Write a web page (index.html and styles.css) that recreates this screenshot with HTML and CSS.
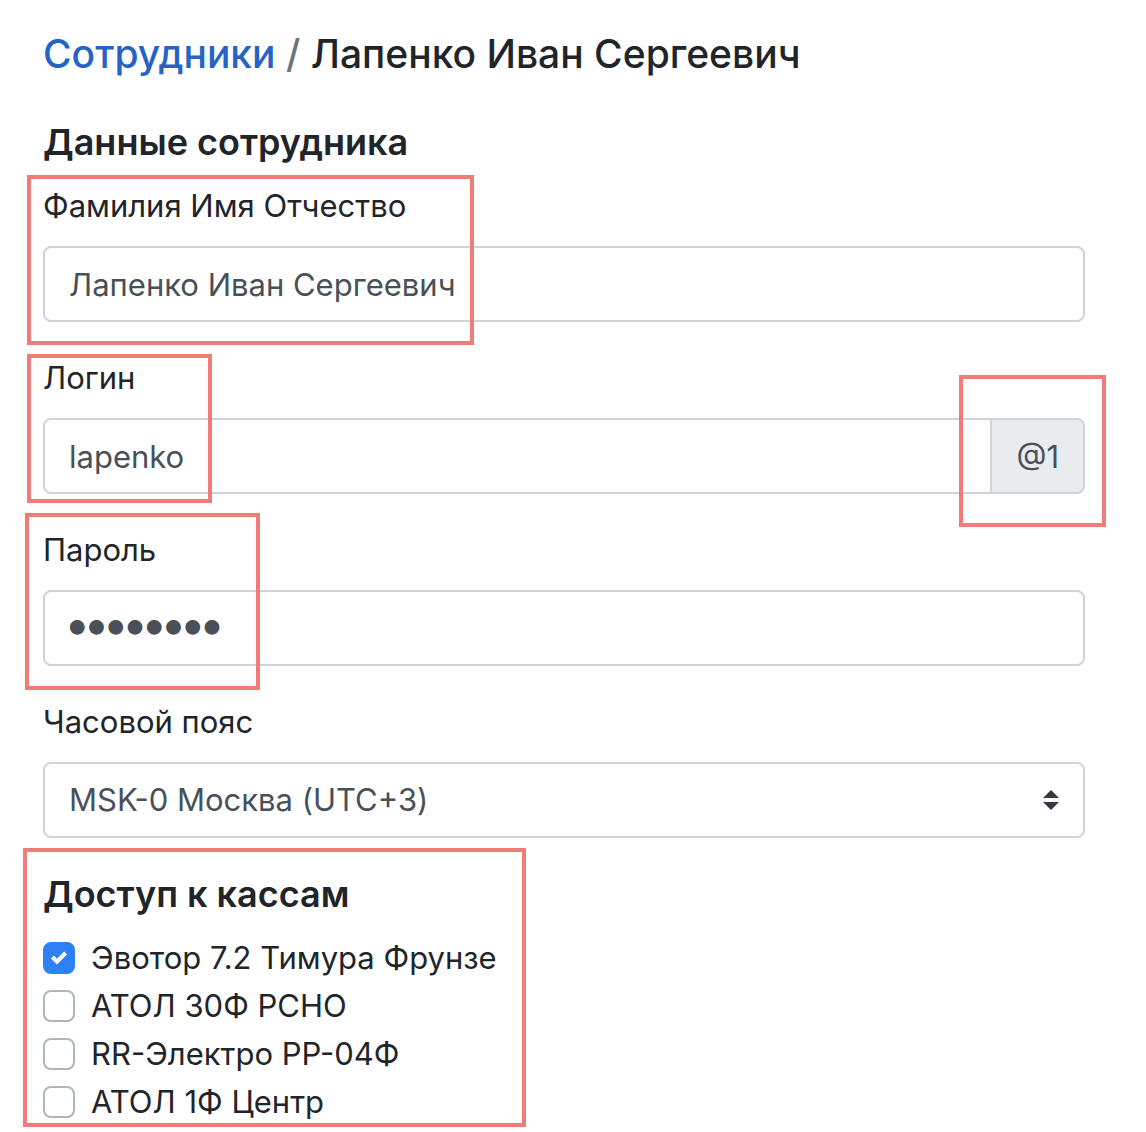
FILE: index.html
```html
<!DOCTYPE html>
<html lang="ru">
<head>
<meta charset="utf-8">
<title>Лапенко Иван Сергеевич</title>
<link rel="stylesheet" href="styles.css">
</head>
<body>
<div class="page">
  <h1 class="title"><a class="crumb" href="#">Сотрудники</a> <span class="sep">/</span> Лапенко Иван Сергеевич</h1>

  <h2 class="section">Данные сотрудника</h2>

  <div class="group">
    <label class="label" for="fio">Фамилия Имя Отчество</label>
    <input class="control" id="fio" type="text" value="Лапенко Иван Сергеевич">
  </div>

  <div class="group">
    <label class="label" for="login">Логин</label>
    <div class="input-group">
      <input class="control control-left" id="login" type="text" value="lapenko">
      <span class="addon">@1</span>
    </div>
  </div>

  <div class="group">
    <label class="label" for="pass">Пароль</label>
    <input class="control control-pass" id="pass" type="password" value="12345678">
  </div>

  <div class="group">
    <label class="label" for="tz">Часовой пояс</label>
    <select class="control select" id="tz">
      <option>MSK-0 Москва (UTC+3)</option>
    </select>
  </div>

  <h2 class="section">Доступ к кассам</h2>

  <div class="checks">
    <div class="check">
      <span class="box box-on">
        <svg viewBox="0 0 8 8" width="16" height="16"><path fill="#fff" d="M6.564.75l-3.59 3.612-1.538-1.55L0 4.26 2.974 7.25 8 2.193z"/></svg>
      </span>
      <span class="check-label">Эвотор 7.2 Тимура Фрунзе</span>
    </div>
    <div class="check">
      <span class="box"></span>
      <span class="check-label">АТОЛ 30Ф РСНО</span>
    </div>
    <div class="check">
      <span class="box"></span>
      <span class="check-label">RR-Электро РР-04Ф</span>
    </div>
    <div class="check">
      <span class="box"></span>
      <span class="check-label">АТОЛ 1Ф Центр</span>
    </div>
  </div>
</div>

<div class="mark mark-fio"></div>
<div class="mark mark-login"></div>
<div class="mark mark-domain"></div>
<div class="mark mark-pass"></div>
<div class="mark mark-access"></div>
</body>
</html>
```

FILE: styles.css
```css
html, body {
  margin: 0;
  padding: 0;
  background: #fff;
}

body {
  position: relative;
  min-height: 1132px;
  font-family: Inter, "Noto Sans", "Liberation Sans", sans-serif;
  color: #212529;
  overflow: hidden;
}

.page {
  padding: 30px 61px 0 43px;
}

.title {
  margin: 0 0 40px;
  font-size: 39px;
  line-height: 48px;
  font-weight: 500;
  color: #212529;
}

.crumb {
  color: #2563c4;
  text-decoration: none;
}

.sep {
  color: #6c757d;
}

.section {
  margin: 0 0 16px;
  font-size: 36px;
  line-height: 48px;
  font-weight: 600;
}

.group {
  margin-bottom: 32px;
}

.label {
  display: block;
  margin-bottom: 16px;
  font-size: 31px;
  line-height: 48px;
}

.control {
  display: block;
  box-sizing: border-box;
  width: 100%;
  height: 76px;
  margin: 0;
  padding: 12px 24px;
  font-family: inherit;
  font-size: 31px;
  line-height: 48px;
  color: #495057;
  background: #fff;
  border: 2px solid #ced4da;
  border-radius: 8px;
  outline: none;
}

.control-pass {
  padding: 7px 24px 17px 19px;
  font-size: 47px;
  line-height: 48px;
  letter-spacing: -7.2px;
}

.input-group {
  display: flex;
}

.control-left {
  flex: 1;
  min-width: 0;
  border-radius: 8px 0 0 8px;
}

.addon {
  display: flex;
  align-items: center;
  box-sizing: border-box;
  height: 76px;
  margin-left: -2px;
  padding: 0 24px;
  font-size: 31px;
  color: #495057;
  background: #e9ecef;
  border: 2px solid #ced4da;
  border-radius: 0 8px 8px 0;
}

.select {
  appearance: none;
  -webkit-appearance: none;
  padding-right: 64px;
  background: #fff url("data:image/svg+xml,%3csvg xmlns='http://www.w3.org/2000/svg' viewBox='0 0 4 5'%3e%3cpath fill='%23343a40' d='M2 0L0 2h4zm0 5L0 3h4z'/%3e%3c/svg%3e") no-repeat right 24px center / 16px 20px;
}

.checks {
  display: flex;
  flex-direction: column;
}

.check {
  display: flex;
  align-items: flex-start;
  gap: 16px;
  font-size: 31px;
  line-height: 48px;
}

.box {
  flex: none;
  box-sizing: border-box;
  width: 32px;
  height: 32px;
  margin-top: 8px;
  border: 2px solid #adb5bd;
  border-radius: 8px;
  background: #fff;
  display: flex;
  align-items: center;
  justify-content: center;
}

.box-on {
  background: #2f80f5;
  border-color: #2f80f5;
}

.mark {
  position: absolute;
  box-sizing: border-box;
  border: 4px solid #f07c78;
  pointer-events: none;
}

.mark-fio {
  left: 27px;
  top: 175px;
  width: 447px;
  height: 170px;
}

.mark-login {
  left: 27px;
  top: 354px;
  width: 185px;
  height: 149px;
}

.mark-domain {
  left: 959px;
  top: 375px;
  width: 147px;
  height: 152px;
}

.mark-pass {
  left: 25px;
  top: 513px;
  width: 235px;
  height: 177px;
}

.mark-access {
  left: 23px;
  top: 848px;
  width: 503px;
  height: 279px;
}
```
